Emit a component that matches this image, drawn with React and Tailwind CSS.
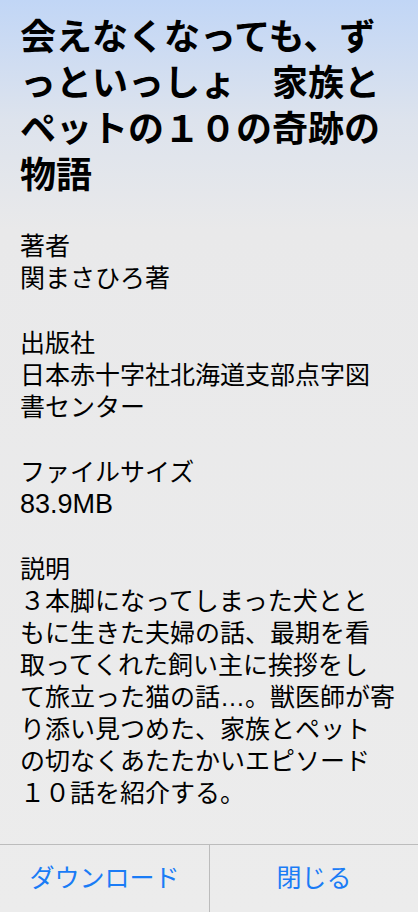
import React from "react";

const font = { fontFamily: '"Liberation Sans", "Noto Sans CJK JP", sans-serif' };

const Field = ({ label, children }) => {
    return (
        <div className="mt-[33px] first:mt-0">
            <p className="leading-[32px]">{label}</p>
            <p className="leading-[32px]">{children}</p>
        </div>
    );
};

const App = () => {
    return (
        <div
            className="w-[418px] h-[912px] flex flex-col text-black bg-[linear-gradient(to_bottom,#c1d6f6_0px,#dde3ed_120px,#e9e9ea_230px,#ececec_100%)] overflow-hidden"
            style={font}
        >
            <div className="flex-1 px-5 pt-[15px]">
                <h1 className="text-[36px] font-bold leading-[46px] whitespace-nowrap">
                    会えなくなっても、ず<br />
                    っといっしょ　家族と<br />
                    ペットの１０の奇跡の<br />
                    物語
                </h1>

                <div className="mt-[31px] text-[25px] whitespace-nowrap">
                    <Field label="著者">関まさひろ著</Field>
                    <Field label="出版社">
                        日本赤十字社北海道支部点字図<br />
                        書センター
                    </Field>
                    <Field label="ファイルサイズ">
                        <span className="text-[27px]">83.9MB</span>
                    </Field>
                    <Field label="説明">
                        ３本脚になってしまった犬とと<br />
                        もに生きた夫婦の話、最期を看<br />
                        取ってくれた飼い主に挨拶をし<br />
                        て旅立った猫の話…。獣医師が寄<br />
                        り添い見つめた、家族とペット<br />
                        の切なくあたたかいエピソード<br />
                        １０話を紹介する。
                    </Field>
                </div>
            </div>

            <div className="h-[68px] flex border-t border-[#bcbcbc] text-[25px] text-[#1a7cf6]">
                <button className="w-[209px] h-full flex items-center justify-center">ダウンロード</button>
                <button className="flex-1 h-full flex items-center justify-center border-l border-[#bcbcbc]">閉じる</button>
            </div>
        </div>
    );
};

export default App;
